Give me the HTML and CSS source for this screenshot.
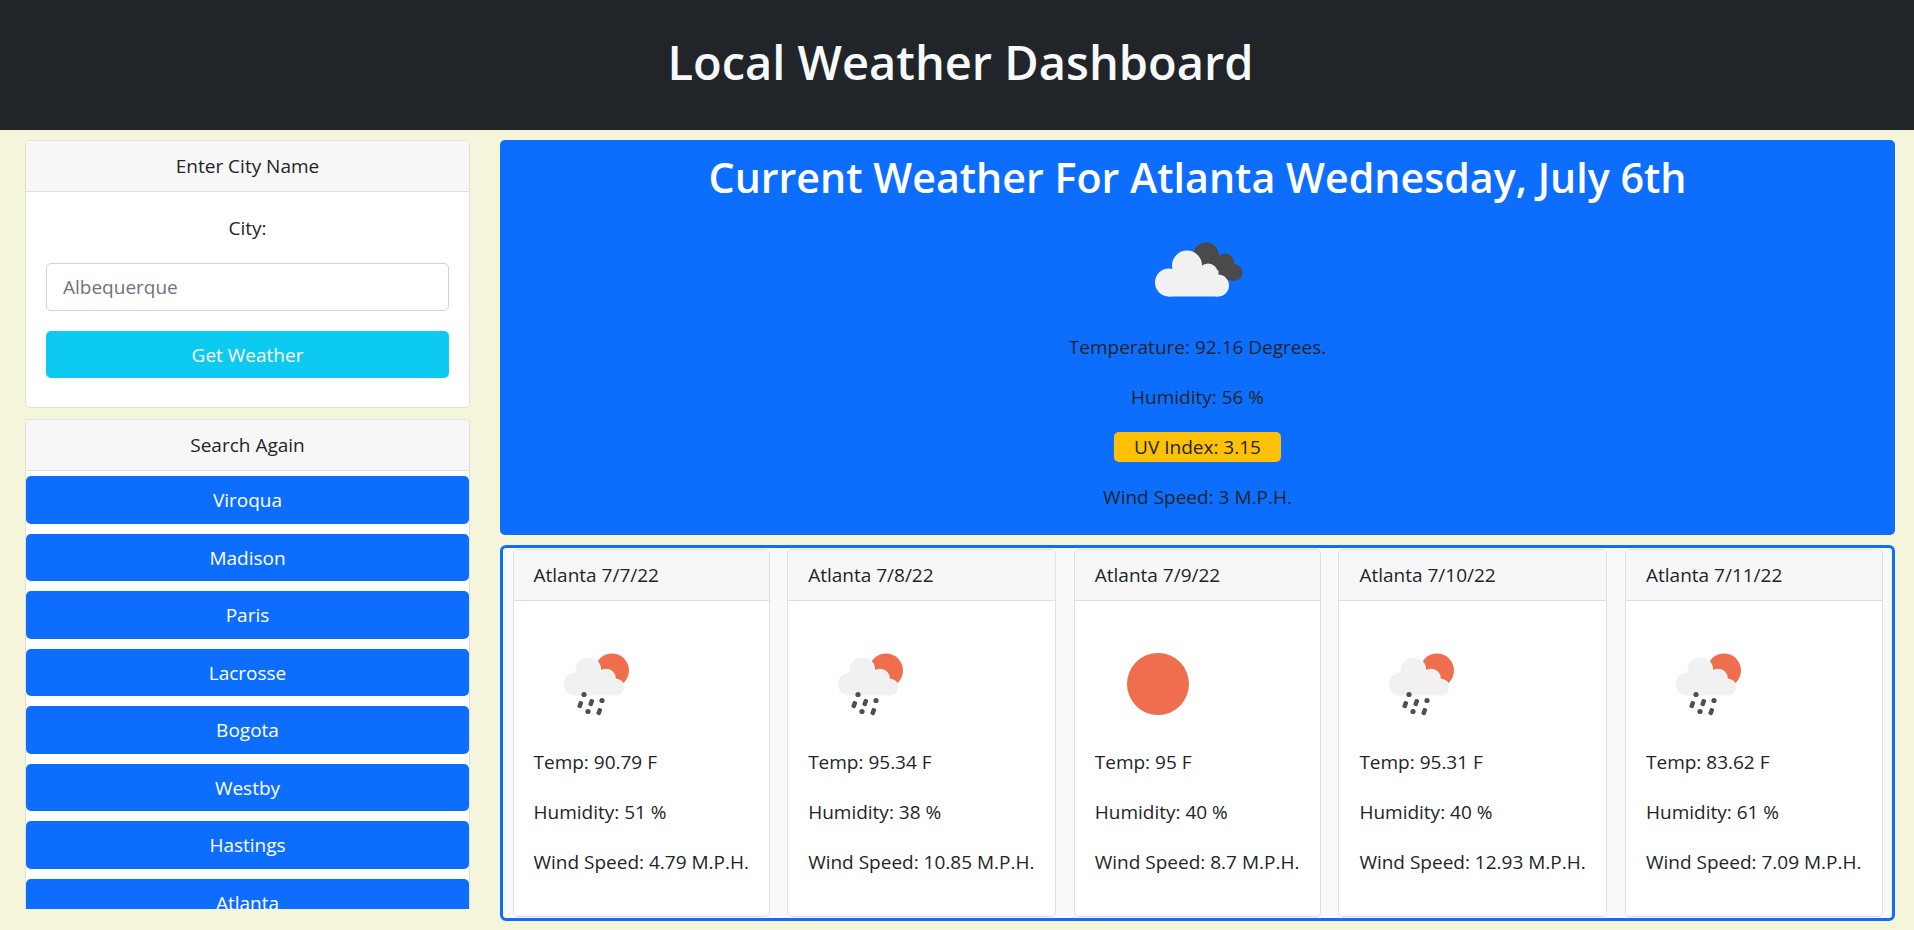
FILE: index.html
```html
<!DOCTYPE html>
<html lang="en">
<head>
<meta charset="utf-8">
<title>Local Weather Dashboard</title>
<link rel="stylesheet" href="styles.css">
</head>
<body>
<svg class="defs" width="0" height="0" aria-hidden="true">
  <symbol id="rain" viewBox="0 0 125 125">
    <g transform="translate(12 13)">
      <circle cx="66" cy="36" r="17" fill="#ee6e4d"/>
      <g fill="#fff" stroke="#fff" stroke-width="1.500">
        <circle cx="42" cy="35.500" r="12.500"/><circle cx="29.500" cy="49.500" r="11.500"/><circle cx="60" cy="44" r="9"/><circle cx="70" cy="53" r="8"/><rect x="29" y="45" width="41" height="16"/>
      </g>
      <g fill="#f1f1f1">
        <circle cx="42" cy="35.500" r="12.500"/><circle cx="29.500" cy="49.500" r="11.500"/><circle cx="60" cy="44" r="9"/><circle cx="70" cy="53" r="8"/><rect x="29" y="45" width="41" height="16"/>
      </g>
      <g fill="#4f4f4f">
        <circle cx="38" cy="60" r="2.600"/><rect x="32" y="66.500" width="4.500" height="7" rx="1.500" transform="rotate(20 34 70)"/><rect x="43" y="64.500" width="4.500" height="7" rx="1.500" transform="rotate(20 45 68)"/><circle cx="56" cy="66" r="2.600"/><circle cx="42" cy="77" r="2.600"/><rect x="51" y="73.500" width="4.500" height="7" rx="1.500" transform="rotate(20 53 77)"/>
      </g>
    </g>
  </symbol>
  <symbol id="sun" viewBox="0 0 125 125">
    <circle cx="63" cy="62.500" r="31" fill="#ee6e4d"/>
  </symbol>
  <symbol id="clouds" viewBox="0 0 125 125">
    <g transform="translate(13.500 17.500)">
      <g fill="#4a4a4a">
        <circle cx="57.500" cy="31" r="13"/><circle cx="76.500" cy="38" r="9"/><circle cx="85.500" cy="48" r="8.500"/><rect x="50" y="35" width="35" height="21"/>
      </g>
      <g fill="#f1f1f1">
        <circle cx="38.500" cy="41" r="15"/><circle cx="59.500" cy="49" r="10"/><circle cx="20.500" cy="58" r="14"/><circle cx="69.500" cy="61" r="11"/><rect x="20" y="46" width="50" height="26"/>
      </g>
    </g>
  </symbol>
</svg>

<header class="topbar">
  <h1 class="topbar-title">Local Weather Dashboard</h1>
</header>

<div class="layout">
  <aside class="sidebar">
    <section class="card card-search">
      <div class="card-header centered">Enter City Name</div>
      <div class="search-body">
        <label class="city-label" for="city">City:</label>
        <input class="city-input" id="city" type="text" placeholder="Albequerque">
        <button class="btn btn-info" type="button">Get Weather</button>
      </div>
    </section>
    <section class="card card-history">
      <div class="card-header centered">Search Again</div>
      <div class="history-list">
        <button class="btn btn-primary" type="button">Viroqua</button>
        <button class="btn btn-primary" type="button">Madison</button>
        <button class="btn btn-primary" type="button">Paris</button>
        <button class="btn btn-primary" type="button">Lacrosse</button>
        <button class="btn btn-primary" type="button">Bogota</button>
        <button class="btn btn-primary" type="button">Westby</button>
        <button class="btn btn-primary" type="button">Hastings</button>
        <button class="btn btn-primary" type="button">Atlanta</button>
      </div>
    </section>
  </aside>

  <main class="content">
    <section class="current">
      <h2 class="current-title">Current Weather For Atlanta Wednesday, July 6th</h2>
      <svg class="current-icon"><use href="#clouds"/></svg>
      <p class="current-line">Temperature: 92.16 Degrees.</p>
      <p class="current-line">Humidity: 56 %</p>
      <p class="current-line"><span class="uv">UV Index: 3.15</span></p>
      <p class="current-line">Wind Speed: 3 M.P.H.</p>
    </section>

    <section class="forecast">
      <article class="card day">
        <div class="card-header">Atlanta 7/7/22</div>
        <div class="day-body">
          <svg class="day-icon"><use href="#rain"/></svg>
          <p class="day-line">Temp: 90.79 F</p>
          <p class="day-line">Humidity: 51 %</p>
          <p class="day-line">Wind Speed: 4.79 M.P.H.</p>
        </div>
      </article>
      <article class="card day">
        <div class="card-header">Atlanta 7/8/22</div>
        <div class="day-body">
          <svg class="day-icon"><use href="#rain"/></svg>
          <p class="day-line">Temp: 95.34 F</p>
          <p class="day-line">Humidity: 38 %</p>
          <p class="day-line">Wind Speed: 10.85 M.P.H.</p>
        </div>
      </article>
      <article class="card day">
        <div class="card-header">Atlanta 7/9/22</div>
        <div class="day-body">
          <svg class="day-icon"><use href="#sun"/></svg>
          <p class="day-line">Temp: 95 F</p>
          <p class="day-line">Humidity: 40 %</p>
          <p class="day-line">Wind Speed: 8.7 M.P.H.</p>
        </div>
      </article>
      <article class="card day">
        <div class="card-header">Atlanta 7/10/22</div>
        <div class="day-body">
          <svg class="day-icon"><use href="#rain"/></svg>
          <p class="day-line">Temp: 95.31 F</p>
          <p class="day-line">Humidity: 40 %</p>
          <p class="day-line">Wind Speed: 12.93 M.P.H.</p>
        </div>
      </article>
      <article class="card day">
        <div class="card-header">Atlanta 7/11/22</div>
        <div class="day-body">
          <svg class="day-icon"><use href="#rain"/></svg>
          <p class="day-line">Temp: 83.62 F</p>
          <p class="day-line">Humidity: 61 %</p>
          <p class="day-line">Wind Speed: 7.09 M.P.H.</p>
        </div>
      </article>
    </section>
  </main>
</div>
</body>
</html>
```

FILE: styles.css
```css
* { box-sizing: border-box; }

html, body { height: 100%; }

body {
  margin: 0;
  overflow: hidden;
  background: #f5f5dc;
  color: #212529;
  font-family: "Open Sans", "Noto Sans", sans-serif;
  font-size: 19px;
  line-height: 30px;
}

.defs { position: absolute; }

.topbar {
  height: 130px;
  padding: 0 0 7px 7px;
  background: #212529;
  display: flex;
  align-items: center;
  justify-content: center;
}

.topbar-title {
  margin: 0;
  color: #f8f9fa;
  font-size: 47px;
  font-weight: 600;
  line-height: 60px;
}

.layout {
  display: flex;
  gap: 30px;
  padding: 10px 19px 0 25px;
}

.sidebar {
  width: 445px;
  flex: none;
  display: flex;
  flex-direction: column;
  gap: 11px;
}

.content {
  flex: 1;
  min-width: 0;
  display: flex;
  flex-direction: column;
  gap: 10px;
}

.card {
  background: #fff;
  border: 1px solid #dfdfdf;
  border-radius: 5px;
}

.card-header {
  height: 51px;
  padding: 10px 20px;
  background: #f7f7f7;
  border-bottom: 1px solid #dfdfdf;
  border-radius: 4px 4px 0 0;
  white-space: nowrap;
}

.centered { text-align: center; }

.search-body {
  display: flex;
  flex-direction: column;
  padding: 21px 20px 29px;
}

.city-label {
  display: block;
  margin-bottom: 20px;
  text-align: center;
}

.city-input {
  height: 47.5px;
  margin-bottom: 20px;
  padding: 0 16px;
  border: 1px solid #ced4da;
  border-radius: 5px;
  color: #212529;
  font: inherit;
}

.city-input::placeholder { color: #6c757d; opacity: 1; }

.btn {
  display: block;
  width: 100%;
  height: 47.5px;
  padding: 1px 0 0;
  border: 0;
  border-radius: 5px;
  color: #fff;
  font: inherit;
  text-align: center;
}

.btn-info { background: #0dcaf0; }

.btn-primary { background: #0d6efd; }

.card-history {
  height: 490px;
  overflow: hidden;
  border-bottom: 0;
  border-radius: 5px 5px 0 0;
}

.history-list {
  display: flex;
  flex-direction: column;
  gap: 10px;
  padding-top: 5px;
}

.current {
  height: 395px;
  padding-top: 6.5px;
  background: #0d6efd;
  border-radius: 5px;
  text-align: center;
}

.current-title {
  margin: 0;
  color: #fff;
  font-size: 41.2px;
  font-weight: 600;
  line-height: 60px;
  white-space: nowrap;
}

.current-icon {
  display: block;
  width: 125px;
  height: 125px;
  margin: 0 auto;
}

.current-line { margin: 0 0 20px; }

.uv {
  display: inline-block;
  height: 30px;
  padding: 0 20px;
  background: #ffc107;
  border-radius: 5px;
  vertical-align: top;
}

.forecast {
  display: grid;
  grid-template-columns: 257px 269px 247px 269px 258px;
  justify-content: space-between;
  height: 376px;
  padding: 1px 9px 1px 9.5px;
  background: #f8f9fa;
  border: 3px solid #0d6efd;
  border-radius: 6px;
}

.day { overflow: hidden; }

.day-body { padding: 20px 20px 0; }

.day-icon {
  display: block;
  width: 125px;
  height: 126px;
}

.day-line {
  margin: 0 0 20px;
  white-space: nowrap;
}
```
